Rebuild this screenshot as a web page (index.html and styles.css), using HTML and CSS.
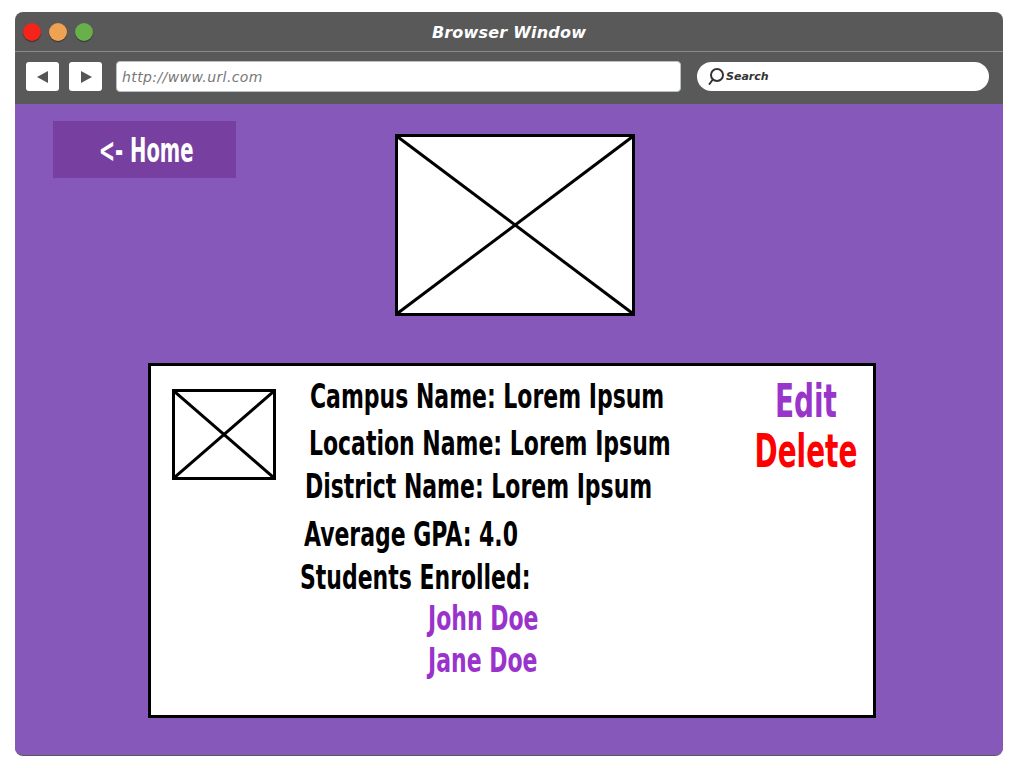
FILE: index.html
```html
<!DOCTYPE html>
<html>
<head>
<meta charset="utf-8">
<title>Campus</title>
<link rel="stylesheet" href="styles.css">
</head>
<body>
<div class="window">
  <div class="titlebar">
    <div class="lights">
      <span class="light red"></span>
      <span class="light orange"></span>
      <span class="light green"></span>
    </div>
    <div class="title">Browser Window</div>
    <div></div>
  </div>
  <div class="toolbar">
    <div class="nav"><svg width="14" height="14" viewBox="0 0 14 14"><polygon points="12,1 12,13 1,7" fill="#555"/></svg></div>
    <div class="nav"><svg width="14" height="14" viewBox="0 0 14 14"><polygon points="2,1 2,13 13,7" fill="#555"/></svg></div>
    <div class="url">http://www.url.com</div>
    <div class="search">
      <svg class="search-icon" width="18" height="20" viewBox="0 0 18 20"><circle cx="10" cy="8" r="6" fill="none" stroke="#333" stroke-width="2"/><line x1="5.8" y1="12.5" x2="2.5" y2="17" stroke="#333" stroke-width="2" stroke-linecap="round"/></svg>
      <span>Search</span>
    </div>
  </div>
  <div class="content">
    <div class="top-row">
      <a class="home"><span class="home-text">&lt;- Home</span></a>
      <div class="hero-img">
        <svg width="100%" height="100%" viewBox="0 0 100 100" preserveAspectRatio="none"><line x1="0" y1="0" x2="100" y2="100" stroke="#000" stroke-width="3" vector-effect="non-scaling-stroke"/><line x1="100" y1="0" x2="0" y2="100" stroke="#000" stroke-width="3" vector-effect="non-scaling-stroke"/></svg>
      </div>
    </div>
    <div class="card">
      <div class="thumb">
        <svg width="100%" height="100%" viewBox="0 0 100 100" preserveAspectRatio="none"><line x1="0" y1="0" x2="100" y2="100" stroke="#000" stroke-width="3" vector-effect="non-scaling-stroke"/><line x1="100" y1="0" x2="0" y2="100" stroke="#000" stroke-width="3" vector-effect="non-scaling-stroke"/></svg>
      </div>
      <div class="info">
        <div class="line l-campus">Campus Name: Lorem Ipsum</div>
        <div class="line l-location">Location Name: Lorem Ipsum</div>
        <div class="line l-district">District Name: Lorem Ipsum</div>
        <div class="line l-gpa">Average GPA: 4.0</div>
        <div class="line l-students">Students Enrolled:</div>
        <div class="line student l-john">John Doe</div>
        <div class="line student l-jane">Jane Doe</div>
      </div>
      <div class="actions">
        <a class="action edit">Edit</a>
        <a class="action delete">Delete</a>
      </div>
    </div>
  </div>
</div>
</body>
</html>
```

FILE: styles.css
```css
html, body {
  margin: 0;
  padding: 0;
  background: #ffffff;
}

body {
  font-family: "DejaVu Sans Condensed", "DejaVu Sans", sans-serif;
}

.window {
  margin: 12px 0 0 15px;
  width: 988px;
  height: 744px;
  background: #595959;
  border-radius: 8px;
  overflow: hidden;
  display: flex;
  flex-direction: column;
}

.titlebar {
  height: 39px;
  border-bottom: 1px solid #8a8a8a;
  display: grid;
  grid-template-columns: 1fr auto 1fr;
  align-items: center;
}

.lights {
  display: flex;
  gap: 8px;
  padding-left: 8px;
  align-items: center;
}

.light {
  width: 18px;
  height: 18px;
  border-radius: 50%;
  box-shadow: 0 1px 1px rgba(0, 0, 0, 0.45);
}

.red { background: #f4241a; }
.orange { background: #eea252; }
.green { background: #69b04b; }

.title {
  color: #ffffff;
  font-family: "DejaVu Sans", sans-serif;
  font-weight: bold;
  font-style: italic;
  font-size: 16px;
  letter-spacing: 0.2px;
  padding-top: 1px;
}

.toolbar {
  height: 52px;
  display: flex;
  align-items: center;
  padding: 0 14px 3px 11px;
  box-sizing: border-box;
}

.nav {
  width: 33px;
  height: 29px;
  background: #ffffff;
  border-radius: 3px;
  display: flex;
  align-items: center;
  justify-content: center;
  margin-right: 10px;
}

.nav + .nav {
  margin-right: 14px;
}

.url {
  width: 565px;
  height: 31px;
  box-sizing: border-box;
  background: #ffffff;
  border: 1px solid #b8c0c8;
  border-radius: 4px;
  color: #777777;
  font-family: "DejaVu Sans", sans-serif;
  font-style: italic;
  font-size: 14px;
  letter-spacing: 0.4px;
  display: flex;
  align-items: center;
  padding-left: 5px;
}

.search {
  margin-left: 16px;
  width: 292px;
  height: 29px;
  background: #ffffff;
  border-radius: 15px;
  display: flex;
  align-items: center;
  padding-left: 10px;
  box-sizing: border-box;
  font-family: "DejaVu Sans", sans-serif;
  font-style: italic;
  font-weight: bold;
  font-size: 11px;
  color: #333;
}

.search-icon {
  margin-right: 1px;
}

.content {
  flex: 1;
  background: #8558ba;
  margin-bottom: 1px;
  border-radius: 0 0 7px 7px;
}

.top-row {
  display: flex;
  align-items: flex-start;
  padding: 17px 0 0 38px;
}

.home {
  width: 183px;
  height: 57px;
  background: #773fa0;
  color: #ffffff;
  display: flex;
  align-items: center;
  justify-content: center;
  padding-left: 4px;
  box-sizing: border-box;
}

.home-text {
  display: inline-block;
  font-weight: bold;
  font-size: 34px;
  white-space: nowrap;
  transform: scaleX(0.64);
  transform-origin: 50% 50%;
}

.hero-img {
  margin: 13px 0 0 159px;
  width: 240px;
  height: 182px;
  box-sizing: border-box;
  border: 3px solid #000;
  background: #ffffff;
}

.hero-img svg, .thumb svg {
  display: block;
}

.card {
  margin: 47px 0 0 133px;
  width: 728px;
  height: 355px;
  box-sizing: border-box;
  border: 3px solid #000;
  background: #ffffff;
  display: flex;
  align-items: flex-start;
}

.thumb {
  margin: 23px 0 0 21px;
  width: 104px;
  height: 91px;
  box-sizing: border-box;
  border: 3px solid #000;
  flex-shrink: 0;
}

.info {
  margin: 9px 0 0 24px;
  flex: 0 0 400px;
  min-width: 0;
  display: flex;
  flex-direction: column;
  align-items: flex-start;
  font-size: 33px;
  font-weight: bold;
  color: #000;
}

.line {
  line-height: 44px;
  white-space: nowrap;
  transform: scaleX(0.74);
  transform-origin: 0 50%;
}

.l-campus { margin-left: 10px; }
.l-location { margin-left: 9px; margin-top: 3px; }
.l-district { margin-left: 5px; margin-top: -1px; }
.l-gpa { margin-left: 4px; margin-top: 4px; }
.l-students { margin-left: 0; margin-top: -1px; }
.l-john { margin-top: -3px; }
.l-jane { margin-top: -2px; }

.student {
  margin-left: 128px;
  color: #9933cc;
}

.actions {
  margin: 10px 7px 0 auto;
  width: 120px;
  display: flex;
  flex-direction: column;
  align-items: center;
  font-size: 47px;
  font-weight: bold;
  line-height: 50px;
}

.action {
  display: inline-block;
  white-space: nowrap;
  transform: scaleX(0.66);
  transform-origin: 50% 50%;
}

.edit { color: #9a35c9; }
.delete { color: #ff0000; }
```
